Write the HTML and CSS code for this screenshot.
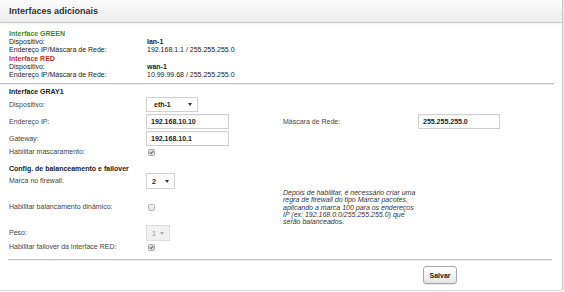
FILE: index.html
```html
<!DOCTYPE html>
<html lang="pt-BR">
<head>
<meta charset="utf-8">
<title>Interfaces adicionais</title>
<link rel="stylesheet" href="styles.css">
</head>
<body>
<div class="panel">
  <div class="panel-head"><h1>Interfaces adicionais</h1></div>
  <div class="panel-body">
    <div class="info">
      <div class="info-title green">Interface GREEN</div>
      <div class="info-row"><span>Dispositivo:</span><b>lan-1</b></div>
      <div class="info-row"><span>Endereço IP/Máscara de Rede:</span><span>192.168.1.1 / 255.255.255.0</span></div>
      <div class="info-title red">Interface RED</div>
      <div class="info-row"><span>Dispositivo:</span><b>wan-1</b></div>
      <div class="info-row"><span>Endereço IP/Máscara de Rede:</span><span>10.99.99.68 / 255.255.255.0</span></div>
    </div>
    <div class="sep sep-top"></div>

    <div class="sec-title gray-title">Interface GRAY1</div>
    <div class="grid gray-grid">
      <label class="lbl">Dispositivo:</label>
      <div class="select sel-eth"><b>eth-1</b><i class="arrow"></i></div>
      <span></span><span></span>

      <label class="lbl">Endereço IP:</label>
      <div class="input">192.168.10.10</div>
      <label class="lbl">Máscara de Rede:</label>
      <div class="input">255.255.255.0</div>

      <label class="lbl">Gateway:</label>
      <div class="input">192.168.10.1</div>
      <span></span><span></span>

      <label class="lbl">Habilitar mascaramento:</label>
      <div class="cbwrap"><span class="cb checked"><svg viewBox="0 0 7 7"><path d="M1.6 3.6 L3 5 L5.6 1.8" /></svg></span></div>
      <span></span><span></span>
    </div>

    <div class="sec-title cfg-title">Config. de balanceamento e failover</div>
    <div class="grid bal-grid">
      <label class="lbl">Marca no firewall:</label>
      <div class="select sel-mark"><b>2</b><i class="arrow"></i></div>
      <span></span><span></span>

      <label class="lbl">Habilitar balancamento dinâmico:</label>
      <div class="cbwrap"><span class="cb"></span></div>
      <p class="note">Depois de habilitar, é necessário criar uma regra de firewall do tipo Marcar pacotes, aplicando a marca 100 para os endereços IP (ex: 192.168.0.0/255.255.255.0) que serão balanceados.</p>

      <label class="lbl">Peso:</label>
      <div class="select sel-peso disabled"><span>1</span><i class="arrow"></i></div>
      <span></span><span></span>

      <label class="lbl">Habilitar failover da interface RED:</label>
      <div class="cbwrap"><span class="cb checked"><svg viewBox="0 0 7 7"><path d="M1.6 3.6 L3 5 L5.6 1.8" /></svg></span></div>
      <span></span><span></span>
    </div>

    <div class="sep sep-bottom"></div>
    <div class="actions"><button class="btn">Salvar</button></div>
  </div>
</div>
</body>
</html>
```

FILE: styles.css
```css
* { box-sizing: border-box; }
html, body { margin: 0; padding: 0; background: #fff; }
body {
  font-family: "Liberation Sans", Arial, sans-serif;
  font-size: 7px;
  color: #333;
}
.panel {
  width: 563px;
  height: 291px;
  border-right: 1px solid #c6c6c6;
  border-bottom: 1px solid #d6d6d6;
  box-shadow: 1px 0 1px rgba(0,0,0,0.08);
  border-bottom-right-radius: 3px;
}
.panel-head {
  height: 23px;
  background: linear-gradient(#fbfbfb, #ececec);
  border-bottom: 1px solid #c9c9c9;
  box-shadow: 0 1px 2px rgba(0,0,0,0.06);
  display: flex;
  align-items: center;
  padding-left: 9px;
}
.panel-head h1 {
  margin: 0;
  font-size: 9px;
  font-weight: bold;
  color: #333;
  letter-spacing: 0;
}
.panel-body { padding: 7px 9px 0 9px; }

.info { line-height: 8.2px; color: #222; }
.info-title { font-weight: bold; }
.green { color: #3e8a1e; }
.red { color: #c3302c; }
.info-row { display: grid; grid-template-columns: 138px auto; }
.info-row b { font-weight: bold; }

.sep { height: 2px; border-top: 1px solid #c2c2c2; border-bottom: 1px solid #ececec; }
.sep-top { margin: 4px -9px 0 -9px; width: 554px; }
.sep-bottom { margin: 6px 0 0 -1px; width: 544px; }

.sec-title { font-weight: bold; color: #222; line-height: 8px; }
.gray-title { margin-top: 3px; }
.cfg-title { margin-top: 9px; }

.grid {
  display: grid;
  grid-template-columns: 137px 137px 135px 100px;
  align-items: center;
}
.gray-grid { margin-top: 1px; grid-template-rows: 15px 15px 15px 8px; row-gap: 2px; }
.bal-grid { grid-template-rows: 16px 36px 16px 12px; }

.lbl { color: #444; line-height: 8px; }

.input {
  width: 83px;
  height: 15px;
  border: 1px solid #cfcfcf;
  box-shadow: inset 0 1px 1px rgba(0,0,0,0.04);
  font-weight: bold;
  color: #222;
  padding-left: 4px;
  display: flex;
  align-items: center;
}
.grid .input:nth-child(8) { width: 82px; }

.select {
  height: 15px;
  border: 1px solid #d2d2d2;
  background: #fff;
  display: flex;
  align-items: center;
  justify-content: space-between;
  padding: 0 5px 0 5px;
  color: #222;
}
.sel-eth { width: 52px; padding-left: 7px; }
.sel-mark { width: 29px; height: 16px; padding-left: 5px; }
.sel-peso { width: 24px; height: 16px; padding-left: 5px; }
.select.disabled { background: #f1f1f1; border-color: #dedede; color: #999; }
.arrow {
  display: block;
  width: 0; height: 0;
  border-left: 2px solid transparent;
  border-right: 2px solid transparent;
  border-top: 3px solid #333;
}
.disabled .arrow { border-top-color: #aaa; }

.cbwrap { padding-left: 2px; display: flex; align-items: center; }
.cb {
  width: 7px; height: 7px;
  border: 1px solid #b5b5b5;
  border-radius: 1.5px;
  background: linear-gradient(#f4f4f4, #e2e2e2);
  display: block;
}
.cb svg { display: block; width: 5px; height: 5px; }
.cb path { fill: none; stroke: #222; stroke-width: 1.3; }
.cb.checked { background: #dcdcdc; border-color: #a8a8a8; }

.note {
  margin: 0;
  grid-column: 3 / 5;
  font-style: italic;
  line-height: 7.3px;
  width: 134px;
  color: #333;
}

.actions { display: flex; justify-content: flex-end; padding-right: 96px; margin-top: 5px; }
.btn {
  font-family: "Liberation Sans", Arial, sans-serif;
  font-size: 7px;
  font-weight: bold;
  color: #222;
  width: 34px;
  height: 18px;
  padding: 0;
  border: 1px solid #a9a9a9;
  border-radius: 3px;
  background: linear-gradient(#ffffff, #e4e4e4);
  box-shadow: 0 1px 1px rgba(0,0,0,0.12);
}
```
